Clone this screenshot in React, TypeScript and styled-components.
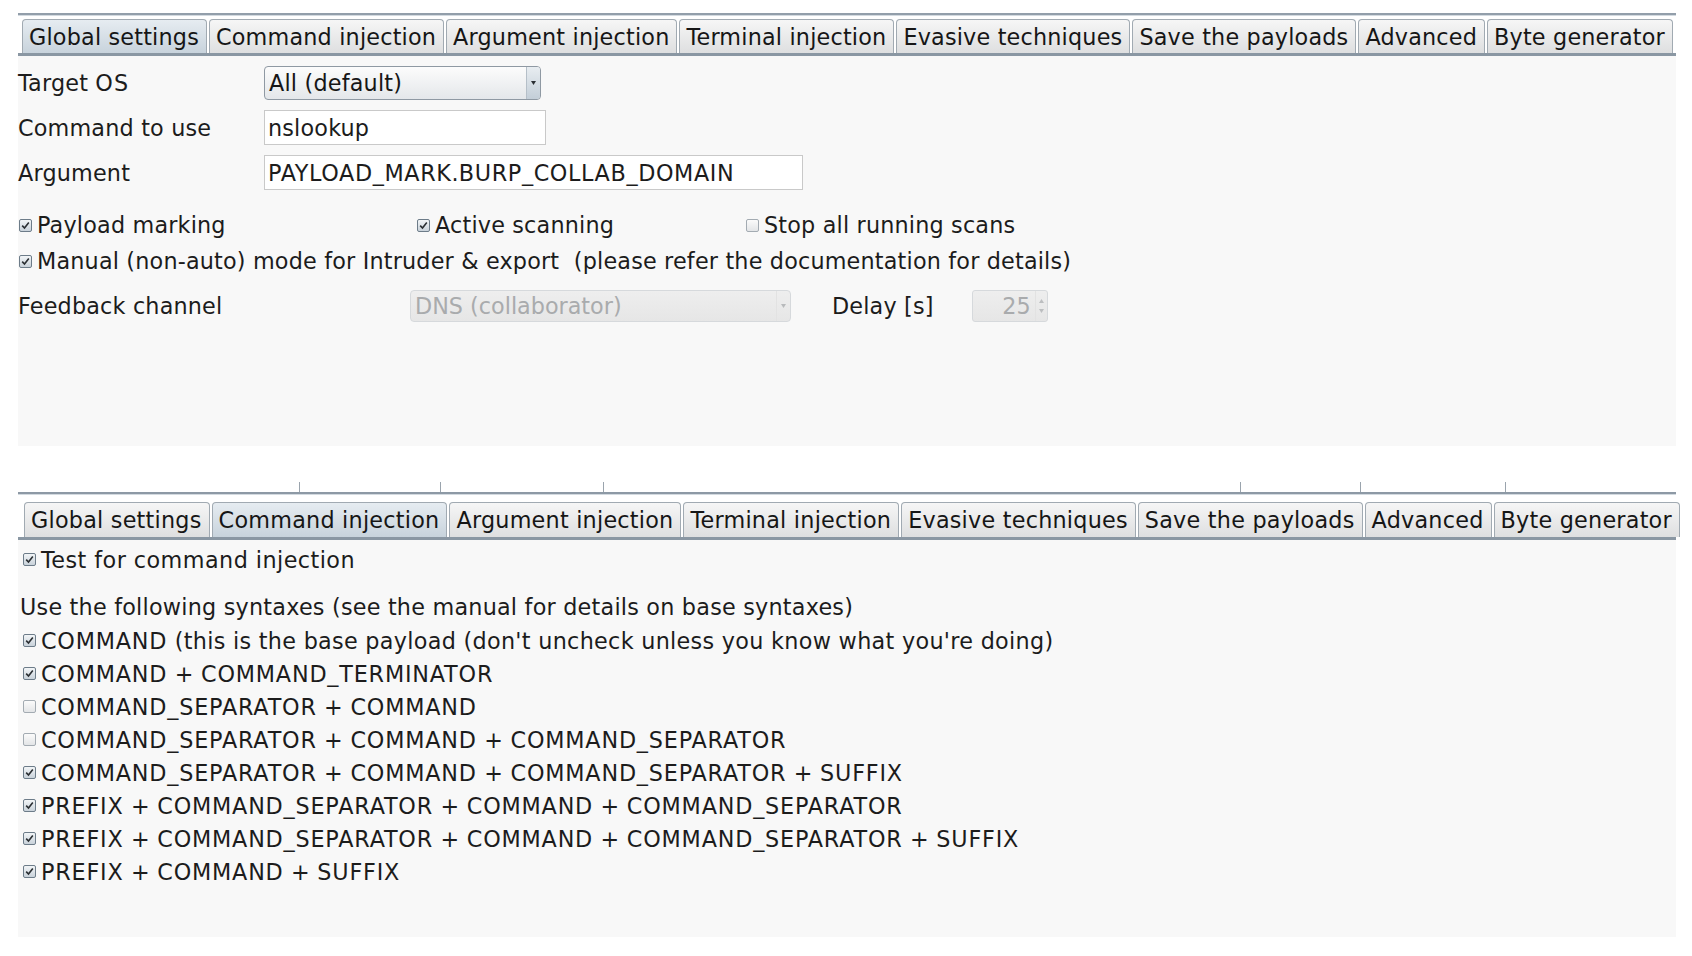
import React from "react";
import styled, { createGlobalStyle } from "styled-components";

const Global = createGlobalStyle`
  html, body { margin: 0; padding: 0; background: #ffffff; }
  body {
    font-family: "DejaVu Sans", "Liberation Sans", sans-serif;
    font-size: 22.3px;
    color: #1c1c1c;
  }
  * { box-sizing: border-box; }
`;

const Page = styled.div`
  width: 1692px;
  height: 956px;
  padding: 13px 16px 0 18px;
  display: flex;
  flex-direction: column;
`;

const Section = styled.section<{ $gapTop?: number; $ls: number }>`
  display: flex;
  flex-direction: column;
  margin-top: ${(p) => p.$gapTop ?? 0}px;
  letter-spacing: ${(p) => p.$ls}px;
`;

const TopRule = styled.div`
  height: 3px;
  border-top: 2px solid #929eaa;
  border-bottom: 1px solid #d3dae0;
  margin-bottom: 3px;
`;

const CutStrip = styled.div`
  display: flex;
  height: 10px;
`;

const CutSeg = styled.div<{ $w: number }>`
  width: ${(p) => p.$w}px;
  border-right: 1px solid #9aa4ad;
  flex: none;
`;

const CutRule = styled.div`
  height: 3px;
  border-top: 2px solid #8d99a5;
  border-bottom: 1px solid #d3dae0;
  margin-bottom: 7px;
`;

const TabRow = styled.div<{ $indent: number; $h: number; $ls: number }>`
  display: flex;
  gap: 2px;
  padding-left: ${(p) => p.$indent}px;
  height: ${(p) => p.$h}px;
  border-bottom: 3px solid #8a97a3;
  box-shadow: 0 1px 0 #c9d2da;
  letter-spacing: ${(p) => p.$ls}px;
`;

const Tab = styled.div<{ $active?: boolean }>`
  display: flex;
  align-items: center;
  padding: 0 7px 0 6px;
  border: 1px solid #a1aab2;
  border-bottom: none;
  border-radius: 4px 4px 0 0;
  white-space: nowrap;
  color: #161616;
  background: ${(p) =>
    p.$active
      ? "linear-gradient(#e6ecf1, #c8d3dc)"
      : "linear-gradient(#f6f6f6, #dedfe0)"};
`;

const Panel = styled.div<{ $h: number }>`
  background: #f8f8f8;
  height: ${(p) => p.$h}px;
  display: flex;
  flex-direction: column;
`;

const TopBody = styled.div`
  display: flex;
  flex-direction: column;
  padding-top: 10px;
`;

const FormRow = styled.div<{ $h: number; $mt?: number }>`
  display: flex;
  align-items: center;
  height: ${(p) => p.$h}px;
  margin-top: ${(p) => p.$mt ?? 0}px;
`;

const Label = styled.div<{ $w?: number; $ml?: number }>`
  width: ${(p) => (p.$w ? `${p.$w}px` : "auto")};
  margin-left: ${(p) => p.$ml ?? 0}px;
  flex: none;
  white-space: pre;
`;

const Caps = styled.span<{ $ls: number }>`
  letter-spacing: ${(p) => p.$ls}px;
`;

const Combo = styled.div<{ $w: number; $h: number; $disabled?: boolean }>`
  width: ${(p) => p.$w}px;
  height: ${(p) => p.$h}px;
  display: flex;
  align-items: stretch;
  border: 1px solid ${(p) => (p.$disabled ? "#d6d9dc" : "#8f99a3")};
  border-radius: 4px;
  overflow: hidden;
  letter-spacing: ${(p) => (p.$disabled ? 0 : 0.2)}px;
  color: ${(p) => (p.$disabled ? "#a9abad" : "#161616")};
  background: ${(p) =>
    p.$disabled
      ? "linear-gradient(#eeeeee, #e6e6e6)"
      : "linear-gradient(#fcfcfc, #e4e7ea)"};
`;

const ComboText = styled.div`
  flex: 1;
  display: flex;
  align-items: center;
  padding-left: 4px;
  white-space: nowrap;
`;

const ComboArrow = styled.div<{ $disabled?: boolean }>`
  width: 14px;
  display: flex;
  align-items: center;
  justify-content: center;
  border-left: 1px solid ${(p) => (p.$disabled ? "#e2e2e2" : "#b5bfc8")};
  background: ${(p) =>
    p.$disabled ? "transparent" : "linear-gradient(#e8edf1, #c3ced8)"};
`;

const TextField = styled.div<{ $w: number }>`
  width: ${(p) => p.$w}px;
  height: 35px;
  background: #ffffff;
  border: 1px solid #c9c9c9;
  display: flex;
  align-items: center;
  padding-left: 3px;
  white-space: nowrap;
`;

const CheckGrid = styled.div<{ $cols: string; $h: number; $mt: number }>`
  display: grid;
  grid-template-columns: ${(p) => p.$cols};
  align-items: center;
  height: ${(p) => p.$h}px;
  margin-top: ${(p) => p.$mt}px;
`;

const CheckItem = styled.label<{ $indent?: number }>`
  display: flex;
  align-items: center;
  white-space: pre;
  padding-left: ${(p) => p.$indent ?? 0}px;
`;

const Box = styled.span<{ $on: boolean }>`
  width: 13px;
  height: 13px;
  flex: none;
  margin-right: 5px;
  border: 1px solid ${(p) => (p.$on ? "#6d7c89" : "#a3abb2")};
  border-radius: 2px;
  background: ${(p) =>
    p.$on ? "linear-gradient(#f2f5f7, #c9d2da)" : "linear-gradient(#fbfbfb, #e3e5e7)"};
  display: flex;
  align-items: center;
  justify-content: center;
`;

const Spinner = styled.div`
  width: 76px;
  height: 32px;
  display: flex;
  border: 1px solid #d6d9dc;
  border-radius: 3px;
  background: linear-gradient(#eeeeee, #e6e6e6);
  color: #a9abad;
  letter-spacing: 0;
  margin-left: 38px;
`;

const SpinValue = styled.div`
  flex: 1;
  display: flex;
  align-items: center;
  justify-content: flex-end;
  padding-right: 4px;
`;

const SpinArrows = styled.div`
  width: 12px;
  display: flex;
  flex-direction: column;
  align-items: center;
  justify-content: center;
  gap: 6px;
  border-left: 1px solid #e2e2e2;
`;

const BottomBody = styled.div`
  display: flex;
  flex-direction: column;
  padding-top: 3px;
  padding-left: 5px;
`;

const ListRow = styled.div<{ $mt?: number; $indent?: number; $ls?: number }>`
  display: flex;
  align-items: center;
  height: 33px;
  margin-top: ${(p) => p.$mt ?? 0}px;
  margin-left: ${(p) => p.$indent ?? 0}px;
  white-space: pre;
  ${(p) => (p.$ls !== undefined ? `letter-spacing: ${p.$ls}px;` : "")}
`;

const Check = ({ on }: { on: boolean }) => (
  <Box $on={on}>
    {on && (
      <svg width="9" height="9" viewBox="0 0 9 9">
        <path d="M1.2 4.6 L3.5 7 L7.8 1.6" fill="none" stroke="#2b2f33" strokeWidth="1.6" />
      </svg>
    )}
  </Box>
);

const DownTri = ({ color }: { color: string }) => (
  <svg width="5" height="4" viewBox="0 0 5 4">
    <path d="M0 0 H5 L2.5 4 Z" fill={color} />
  </svg>
);

const UpTri = ({ color }: { color: string }) => (
  <svg width="5" height="4" viewBox="0 0 5 4">
    <path d="M0 4 H5 L2.5 0 Z" fill={color} />
  </svg>
);

/* Upper-case runs are rendered slightly wider in the reference (hinted Java text). */
const Fit = ({ text, caps }: { text: string; caps: number }) => (
  <>
    {text.split(/([A-Z_]{2,})/).map((part, i) =>
      /^[A-Z_]{2,}$/.test(part) ? (
        <Caps key={i} $ls={caps}>
          {part}
        </Caps>
      ) : (
        <React.Fragment key={i}>{part}</React.Fragment>
      )
    )}
  </>
);

const TABS = [
  "Global settings",
  "Command injection",
  "Argument injection",
  "Terminal injection",
  "Evasive techniques",
  "Save the payloads",
  "Advanced",
  "Byte generator",
];

const SYNTAXES: [boolean, string][] = [
  [true, "COMMAND (this is the base payload (don't uncheck unless you know what you're doing)"],
  [true, "COMMAND + COMMAND_TERMINATOR"],
  [false, "COMMAND_SEPARATOR + COMMAND"],
  [false, "COMMAND_SEPARATOR + COMMAND + COMMAND_SEPARATOR"],
  [true, "COMMAND_SEPARATOR + COMMAND + COMMAND_SEPARATOR + SUFFIX"],
  [true, "PREFIX + COMMAND_SEPARATOR + COMMAND + COMMAND_SEPARATOR"],
  [true, "PREFIX + COMMAND_SEPARATOR + COMMAND + COMMAND_SEPARATOR + SUFFIX"],
  [true, "PREFIX + COMMAND + SUFFIX"],
];

const Tabs = ({ active, indent, h, ls }: { active: number; indent: number; h: number; ls: number }) => (
  <TabRow $indent={indent} $h={h} $ls={ls}>
    {TABS.map((t, i) => (
      <Tab key={t} $active={i === active}>
        {t}
      </Tab>
    ))}
  </TabRow>
);

export default function App() {
  return (
    <>
      <Global />
      <Page>
        <Section $ls={0.18}>
          <TopRule />
          <Tabs active={0} indent={4} h={37} ls={0.19} />
          <Panel $h={390}>
            <TopBody>
              <FormRow $h={34}>
                <Label $w={246}>
                  Target <Caps $ls={1.2}>OS</Caps>
                </Label>
                <Combo $w={277} $h={34}>
                  <ComboText>All (default)</ComboText>
                  <ComboArrow>
                    <DownTri color="#2a2e33" />
                  </ComboArrow>
                </Combo>
              </FormRow>
              <FormRow $h={35} $mt={10}>
                <Label $w={246}>Command to use</Label>
                <TextField $w={282}>nslookup</TextField>
              </FormRow>
              <FormRow $h={35} $mt={10}>
                <Label $w={246}>Argument</Label>
                <TextField $w={539}>
                  <Fit text="PAYLOAD_MARK.BURP_COLLAB_DOMAIN" caps={0.62} />
                </TextField>
              </FormRow>
              <CheckGrid $cols="399px 329px 1fr" $h={30} $mt={20}>
                <CheckItem $indent={1}>
                  <Check on />
                  Payload marking
                </CheckItem>
                <CheckItem>
                  <Check on />
                  Active scanning
                </CheckItem>
                <CheckItem>
                  <Check on={false} />
                  Stop all running scans
                </CheckItem>
              </CheckGrid>
              <CheckGrid $cols="1fr" $h={30} $mt={6}>
                <CheckItem $indent={1}>
                  <Check on />
                  {"Manual (non-auto) mode for Intruder & export  (please refer the documentation for details)"}
                </CheckItem>
              </CheckGrid>
              <FormRow $h={32} $mt={14}>
                <Label $w={392}>Feedback channel</Label>
                <Combo $w={381} $h={32} $disabled>
                  <ComboText>DNS (collaborator)</ComboText>
                  <ComboArrow $disabled>
                    <DownTri color="#b8babc" />
                  </ComboArrow>
                </Combo>
                <Label $ml={41}>Delay [s]</Label>
                <Spinner>
                  <SpinValue>25</SpinValue>
                  <SpinArrows>
                    <UpTri color="#bcbec0" />
                    <DownTri color="#bcbec0" />
                  </SpinArrows>
                </Spinner>
              </FormRow>
            </TopBody>
          </Panel>
        </Section>

        <Section $gapTop={36} $ls={0.3}>
          <CutStrip>
            <CutSeg $w={282} />
            <CutSeg $w={141} />
            <CutSeg $w={163} />
            <CutSeg $w={637} />
            <CutSeg $w={120} />
            <CutSeg $w={145} />
          </CutStrip>
          <CutRule />
          <Tabs active={1} indent={6} h={38} ls={0.23} />
          <Panel $h={397}>
            <BottomBody>
              <ListRow $ls={0.45}>
                <Check on />
                Test for command injection
              </ListRow>
              <ListRow $mt={14} $indent={-3} $ls={0.22}>
                Use the following syntaxes (see the manual for details on base syntaxes)
              </ListRow>
              {SYNTAXES.map(([on, text], i) => (
                <ListRow key={text} $mt={i === 0 ? 1 : 0}>
                  <Check on={on} />
                  <Fit text={text} caps={0.8} />
                </ListRow>
              ))}
            </BottomBody>
          </Panel>
        </Section>
      </Page>
    </>
  );
}
